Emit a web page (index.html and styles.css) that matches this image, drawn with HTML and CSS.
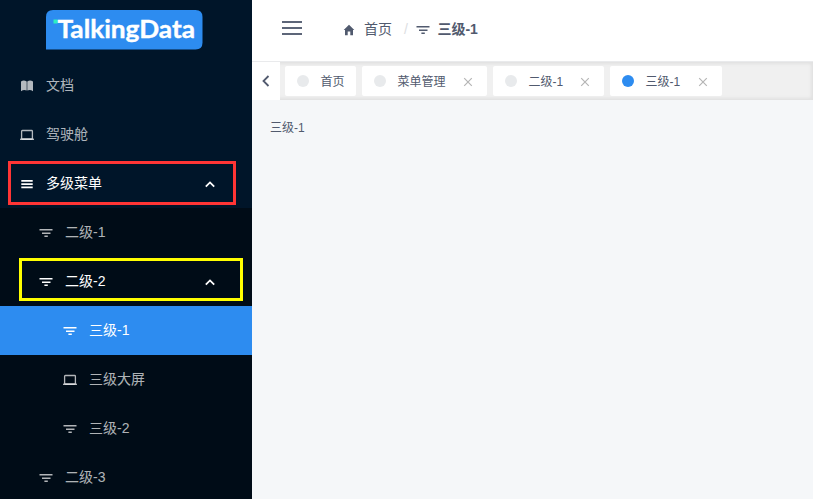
FILE: index.html
```html
<!DOCTYPE html>
<html lang="zh-CN">
<head>
<meta charset="utf-8">
<title>三级-1</title>
<link rel="stylesheet" href="styles.css">
</head>
<body>
<svg class="sprite" width="0" height="0">
  <symbol id="filter" viewBox="0 0 14 14"><path fill="currentColor" d="M.5 3h13v1.4H.5zM3 6.4h8.500v1.500H3zM5.400 9.600h3.400v1.500H5.400z"/></symbol>
  <symbol id="laptop" viewBox="0 0 14 14"><rect x="1.600" y="2.500" width="10.800" height="8.500" rx=".8" fill="none" stroke="currentColor" stroke-width="1.300"/><rect x="0" y="10.600" width="14" height="1.400" fill="currentColor"/></symbol>
  <symbol id="book" viewBox="0 0 14 14"><path fill="currentColor" d="M1 2.500q2.800-2 5.700 0v9q-2.900-1.500-5.700.8zM7.300 2.500q2.800-2 5.700 0v9.800q-2.800-2.300-5.700-.8z"/></symbol>
  <symbol id="menu" viewBox="0 0 14 14"><path fill="currentColor" d="M1.300 3h11.400v1.700H1.300zM1.300 6.300h11.400V8H1.300zM1.300 9.600h11.400v1.700H1.300z"/></symbol>
  <symbol id="up" viewBox="0 0 14 14"><path fill="none" stroke="currentColor" stroke-width="1.800" d="M2.800 9.600 7 5.400l4.200 4.200"/></symbol>
  <symbol id="home" viewBox="0 0 14 14"><path fill="currentColor" d="M7 1.700 12.300 7H11v5.200H8.300V8.500H5.700v3.700H3V7H1.700z"/></symbol>
  <symbol id="close" viewBox="0 0 10 10"><path fill="none" stroke="currentColor" stroke-width="1.200" d="m1.200 1.200 7.600 7.600m0-7.600L1.200 8.800"/></symbol>
</svg>
<div class="layout">
  <aside class="sidebar">
    <div class="logo">
      <svg width="157" height="40" viewBox="0 0 157 40">
        <path fill="#2d8cf0" d="M0 39.500V7q0-7 7-7h142.500q7 0 7 7v25.500q0 7-7 7z"/>
        <rect x="7.500" y="9.500" width="4" height="4" fill="#2df0c0"/>
        <text class="logo-text" x="11.500" y="27.500" textLength="137.500" lengthAdjust="spacingAndGlyphs">TalkingData</text>
      </svg>
    </div>
    <nav>
      <div class="item"><svg class="icon"><use href="#book"/></svg><span>文档</span></div>
      <div class="item"><svg class="icon"><use href="#laptop"/></svg><span>驾驶舱</span></div>
      <div class="item open"><svg class="icon"><use href="#menu"/></svg><span>多级菜单</span><svg class="icon arrow"><use href="#up"/></svg><i class="mark red"></i></div>
      <div class="submenu">
        <div class="item second"><svg class="icon"><use href="#filter"/></svg><span>二级-1</span></div>
        <div class="item second open"><svg class="icon"><use href="#filter"/></svg><span>二级-2</span><svg class="icon arrow"><use href="#up"/></svg><i class="mark yellow"></i></div>
        <div class="item third active"><svg class="icon"><use href="#filter"/></svg><span>三级-1</span></div>
        <div class="item third"><svg class="icon"><use href="#laptop"/></svg><span>三级大屏</span></div>
        <div class="item third"><svg class="icon"><use href="#filter"/></svg><span>三级-2</span></div>
        <div class="item second"><svg class="icon"><use href="#filter"/></svg><span>二级-3</span></div>
      </div>
    </nav>
  </aside>
  <main>
    <header>
      <div class="toggle"><b></b><b></b><b></b></div>
      <div class="crumbs">
        <svg class="icon home"><use href="#home"/></svg><span class="crumb">首页</span>
        <span class="slash">/</span>
        <svg class="icon home"><use href="#filter"/></svg><span class="crumb current">三级-1</span>
      </div>
    </header>
    <div class="tabs">
      <div class="prev"><svg width="8" height="12" viewBox="0 0 8 12"><path fill="none" stroke="#515a6e" stroke-width="1.800" d="M6.500 1 1.500 6l5 5"/></svg></div>
      <div class="tab-list">
        <div class="tab home-tab"><i class="dot"></i><span>首页</span></div>
        <div class="tab wide"><i class="dot"></i><span>菜单管理</span><svg class="close"><use href="#close"/></svg></div>
        <div class="tab"><i class="dot"></i><span>二级-1</span><svg class="close"><use href="#close"/></svg></div>
        <div class="tab"><i class="dot on"></i><span>三级-1</span><svg class="close"><use href="#close"/></svg></div>
      </div>
    </div>
    <section class="content">三级-1</section>
  </main>
</div>
</body>
</html>
```
FILE: styles.css
```css
* { box-sizing: border-box; }
body {
  margin: 0;
  height: 499px;
  overflow: hidden;
  font: 14px/21px "Liberation Sans", "Noto Sans CJK SC", sans-serif;
  color: #515a6e;
}
.sprite { position: absolute; }
.layout { display: flex; height: 499px; }
.sidebar { width: 252px; flex: none; background: #001529; overflow: hidden; }
.logo { height: 61px; padding: 10px 0 0 46px; }
.logo svg { display: block; }
.logo-text { font: 700 25px Lato, sans-serif; fill: #fff; stroke: #fff; stroke-width: .4px; }
.item {
  position: relative;
  display: flex;
  align-items: center;
  height: 49px;
  padding-left: 20px;
  color: rgba(255, 255, 255, .7);
}
.icon { width: 14px; height: 14px; flex: none; display: block; }
.item span { margin-left: 12px; }
.second { padding-left: 39px; }
.third { padding-left: 63px; }
.open { color: #fff; }
.active { background: #2d8cf0; color: #fff; }
.submenu { background: #000c17; }
.arrow { margin-left: auto; margin-right: 35px; }
.mark { position: absolute; border: 3px solid; }
.red { left: 8px; top: 2px; width: 228px; height: 44px; border-color: #ff3535; }
.yellow { left: 19px; top: 1px; width: 224px; height: 43px; border-color: #ff0; }
main { flex: 1; min-width: 0; background: #f5f7f9; }
header { display: flex; align-items: center; height: 62px; background: #fff; border-bottom: 1px solid #e9eaec; padding: 0 0 3px 30px; }
.toggle { width: 20px; height: 14px; display: flex; flex-direction: column; justify-content: space-between; margin-top: -3px; }
.toggle b { height: 2px; background: #5d6679; }
.crumbs { display: flex; align-items: center; margin-left: 40px; }
.home { margin-top: 1px; }
.crumb { margin-left: 8px; }
.current { font-weight: bold; margin-left: 7.5px; }
.slash { color: #dcdee2; margin: 0 8px 0 12px; }
.tabs { display: flex; height: 38px; background: #f0f0f0; box-shadow: inset 0 0 3px 2px rgba(100, 100, 100, .1); }
.prev { width: 28px; background: #fff; display: flex; align-items: center; justify-content: center; }
.tab-list { display: flex; gap: 6px; padding: 4px 0 0 5px; font-size: 12px; }
.tab { display: flex; align-items: center; width: 112px; height: 30px; padding-left: 12px; background: #fff; border-radius: 2px; }
.home-tab { width: 71px; }
.wide { width: 125px; }
.tab:nth-child(3) { width: 111px; }
.dot { width: 12px; height: 12px; border-radius: 50%; background: #e8eaec; }
.on { background: #2d8cf0; }
.tab span { margin-left: 11.5px; padding-top: 2px; }
.close { width: 10px; height: 10px; color: #b5b5b5; margin: 2px 14px 0 auto; }
.content { padding: 18px; font-size: 12px; }
```
